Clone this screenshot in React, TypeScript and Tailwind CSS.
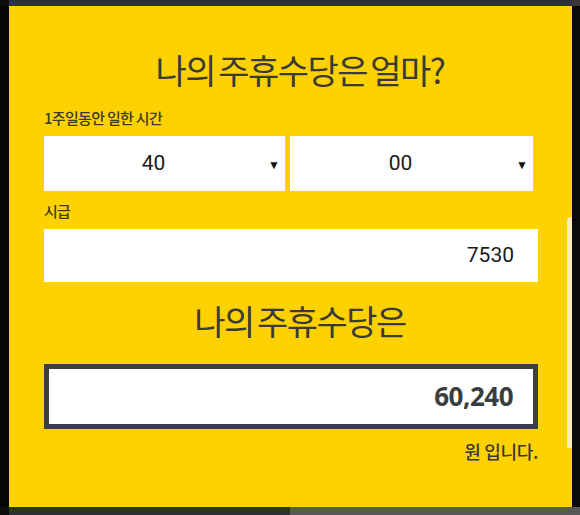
import React from "react";

const kr = { fontFamily: '"Noto Sans CJK KR", "Noto Sans", sans-serif' };
const num = { fontFamily: 'Roboto, "Noto Sans", sans-serif' };

function FakeSelect({ value, width }: { value: string; width: string }) {
  return (
    <div className={`relative flex h-[55px] items-center justify-center bg-white pr-[22px] ${width}`}>
      <span className="text-[21px] text-[#1a1a1a]" style={num}>
        {value}
      </span>
      <span className="absolute right-[5px] top-[20px] text-[12px] text-[#111]">▼</span>
    </div>
  );
}

export default function App() {
  return (
    <div className="flex h-[515px] w-[580px] flex-col overflow-hidden bg-[#111]">
      {/* top strip of the page behind */}
      <div className="flex h-[6px] shrink-0">
        <div className="w-[9px] bg-[#0c0c0c]" />
        <div className="flex-1 bg-[#2b3142]" />
        <div className="w-[8px] bg-[#3a3438]" />
      </div>

      <div className="flex flex-1">
        <div className="w-[9px] bg-[#050505]" />

        <div className="relative flex w-[563px] flex-col bg-[#fed100] pl-[35px]">
          <h1
            className="mt-[43px] w-[494px] pl-[18px] text-center text-[34px] font-normal leading-[42px] tracking-[-1.5px] text-[#3a3a36]"
            style={{ ...kr, wordSpacing: "-3px" }}
          >
            나의 주휴수당은 얼마?
          </h1>

          <p className="mt-[18px] text-[15px] font-medium leading-[18px] tracking-[-0.7px] text-[#3d3a2a]" style={kr}>
            1주일동안 일한 시간
          </p>

          <div className="mt-[9px] flex gap-[5px]">
            <FakeSelect value="40" width="w-[241px]" />
            <FakeSelect value="00" width="w-[243px]" />
          </div>

          <p className="mt-[11px] text-[15px] font-medium leading-[18px] tracking-[-0.7px] text-[#3d3a2a]" style={kr}>
            시급
          </p>

          <div className="mt-[9px] flex h-[53px] w-[494px] items-center justify-end bg-white pr-[24px]">
            <span className="text-[21px] text-[#1a1a1a]" style={num}>
              7530
            </span>
          </div>

          <h2
            className="mt-[18px] w-[494px] pl-[18px] text-center text-[34px] font-normal leading-[42px] tracking-[-1.5px] text-[#3a3a36]"
            style={{ ...kr, wordSpacing: "-3px" }}
          >
            나의 주휴수당은
          </h2>

          <div className="mt-[22px] flex h-[65px] w-[494px] items-center justify-end border-[5px] border-[#3c3f3c] bg-white pr-[20px]">
            <span className="text-[26px] font-bold tracking-[-0.5px] text-[#3a3d40]" style={{ fontFamily: '"Open Sans", "Noto Sans", sans-serif' }}>
              60,240
            </span>
          </div>

          <p className="mt-[12px] w-[494px] text-right text-[18px] font-medium leading-[20px] tracking-[-0.3px] text-[#3b3a32]" style={kr}>
            원 입니다.
          </p>

          {/* scrollbar edge */}
          <div className="absolute right-0 top-[211px] h-[231px] w-[5px] rounded-tl-[4px] bg-[#f8ebbf]" />
        </div>

        <div className="w-[8px] bg-[#0a0a0a]" />
      </div>

      {/* bottom strip */}
      <div className="flex h-[8px] shrink-0">
        <div className="w-[9px] bg-[#0c0c0c]" />
        <div className="w-[281px] bg-[#2e3134]" />
        <div className="flex-1 bg-[#57585a]" />
      </div>
    </div>
  );
}
